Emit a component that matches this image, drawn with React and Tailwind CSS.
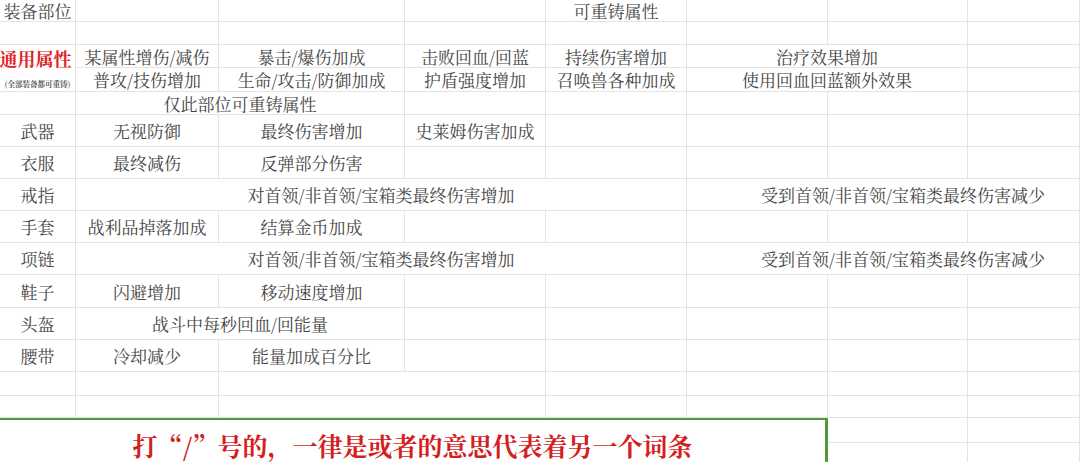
import React from 'react';

const span = {
    1: 'col-span-1',
    2: 'col-span-2',
    3: 'col-span-3',
    4: 'col-span-4',
};

// each row: list of [text, colSpan, align]
const rows = [
    [['装备部位'], [''], [''], [''], ['可重铸属性'], [''], [''], ['']],
    [[''], [''], [''], [''], [''], [''], [''], ['']],
    [['某属性增伤/减伤'], ['暴击/爆伤加成'], ['击败回血/回蓝'], ['持续伤害增加'], ['治疗效果增加', 2], ['']],
    [['普攻/技伤增加'], ['生命/攻击/防御加成'], ['护盾强度增加'], ['召唤兽各种加成'], ['使用回血回蓝额外效果', 2], ['']],
    [[''], ['仅此部位可重铸属性', 2], [''], [''], [''], [''], ['']],
    [['武器'], ['无视防御'], ['最终伤害增加'], ['史莱姆伤害加成'], [''], [''], [''], ['']],
    [['衣服'], ['最终减伤'], ['反弹部分伤害'], [''], [''], [''], [''], ['']],
    [['戒指'], ['对首领/非首领/宝箱类最终伤害增加', 4], ['受到首领/非首领/宝箱类最终伤害减少', 3, 'left']],
    [['手套'], ['战利品掉落加成'], ['结算金币加成'], [''], [''], [''], [''], ['']],
    [['项链'], ['对首领/非首领/宝箱类最终伤害增加', 4], ['受到首领/非首领/宝箱类最终伤害减少', 3, 'left']],
    [['鞋子'], ['闪避增加'], ['移动速度增加'], [''], [''], [''], [''], ['']],
    [['头盔'], ['战斗中每秒回血/回能量', 2], [''], [''], [''], [''], ['']],
    [['腰带'], ['冷却减少'], ['能量加成百分比'], [''], [''], [''], [''], ['']],
    [[''], [''], ['', 2], [''], [''], [''], ['']],
    [[''], [''], ['', 2], [''], [''], [''], ['']],
    [[''], [''], [''], [''], [''], [''], [''], ['']],
    [[''], [''], [''], [''], [''], [''], [''], ['']],
];

const Cell = ({ text, colSpan = 1, align }) => (
    <div
        className={`${span[colSpan]} flex items-center ${align === 'left' ? 'justify-start pl-[74px]' : 'justify-center'} border-r border-b border-[#e4e4e4] whitespace-nowrap`}
    >
        {text && <span className="leading-[17px]">{text}</span>}
    </div>
);

const App = () => {
    return (
        <div className="relative w-[1080px] h-[462px] overflow-hidden bg-white font-['Noto_Serif_CJK_SC','Noto_Sans_CJK_SC',serif] text-[17px] leading-none text-[#454545]">
            <div className="grid grid-cols-[76px_143px_186px_141px_141px_141px_140px_112px] grid-rows-[22px_23px_23px_24px_23px_32px_32px_32px_32px_32px_33px_32px_32px_24px_22px_25px_25px]">
                {rows.map((row, r) => {
                    const cells = row.map(([text, colSpan, align], i) => (
                        <Cell key={`${r}-${i}`} text={text} colSpan={colSpan} align={align} />
                    ));
                    if (r === 2) {
                        cells.unshift(
                            <div key="general" className="row-span-2 flex flex-col items-center border-r border-b border-[#e4e4e4] whitespace-nowrap">
                                <span className="-ml-1 mt-[4px] text-[18px] font-bold text-[#df2323]">通用属性</span>
                                <span className="mt-[13px] text-[7.5px] font-bold text-[#555]">(全部装备都可重铸)</span>
                            </div>
                        );
                    }
                    return cells;
                })}
            </div>

            <div className="absolute left-0 top-[418px] w-[828px] h-[60px] bg-white border-t-2 border-r-[3px] border-[#4f9a3b]">
                <p className="pt-[13px] text-center text-[25px] leading-none font-bold text-[#d41f1f] whitespace-nowrap">
                    打<span className="inline-block w-[1em] text-right">“</span>/<span className="inline-block w-[1em] text-left">”</span>号的<span className="inline-block w-[1em] text-left">，</span>一律是或者的意思代表着另一个词条
                </p>
            </div>
        </div>
    );
};

export default App;
